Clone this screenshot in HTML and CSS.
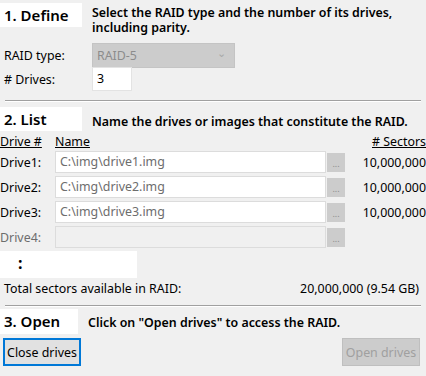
FILE: index.html
```html
<!DOCTYPE html>
<html lang="en">
<head>
  <meta charset="UTF-8" />
  <title>RAID</title>
  <link rel="stylesheet" href="styles.css">
</head>
<body>
  <div class="step step-define">
    <div class="tag">1. Define</div>
    <div class="desc">Select the RAID type and the number of its drives, including parity.</div>
  </div>

  <div class="field">
    <label>RAID type:</label>
    <div class="combo">RAID-5 <span class="arrow">&#8964;</span></div>
  </div>
  <div class="field">
    <label># Drives:</label>
    <div class="num">3</div>
  </div>

  <div class="sep"></div>

  <div class="step step-list">
    <div class="tag">2. List</div>
    <div class="desc">Name the drives or images that constitute the RAID.</div>
  </div>

  <div class="drive-head">
    <span class="col-drive">Drive #</span>
    <span class="col-name">Name</span>
    <span class="col-sectors"># Sectors</span>
  </div>

  <div id="drives"></div>

  <div class="more">:</div>

  <div class="total">
    <span>Total sectors available in RAID:</span>
    <span>20,000,000 (9.54 GB)</span>
  </div>

  <div class="sep sep-open"></div>

  <div class="step step-open">
    <div class="tag">3. Open</div>
    <div class="desc">Click on "Open drives" to access the RAID.</div>
  </div>

  <div class="actions">
    <button class="btn btn-focus">Close drives</button>
    <button class="btn" disabled>Open drives</button>
  </div>

  <script>
    const drives = [
      { name: 'Drive1:', path: 'C:\\img\\drive1.img', sectors: '10,000,000' },
      { name: 'Drive2:', path: 'C:\\img\\drive2.img', sectors: '10,000,000' },
      { name: 'Drive3:', path: 'C:\\img\\drive3.img', sectors: '10,000,000' },
      { name: 'Drive4:', path: '', sectors: '', off: true },
    ];

    const list = document.getElementById('drives');

    drives.forEach(d => {
      const row = document.createElement('div');
      row.className = 'drive' + (d.off ? ' off' : '');
      row.innerHTML =
        '<span class="col-drive"></span>' +
        '<div class="path"></div>' +
        '<div class="browse">...</div>' +
        '<span class="col-sectors"></span>';
      row.querySelector('.col-drive').textContent = d.name;
      row.querySelector('.path').textContent = d.path;
      row.querySelector('.col-sectors').textContent = d.sectors;
      list.appendChild(row);
    });
  </script>
</body>
</html>
```

FILE: styles.css
```css
* { box-sizing: border-box; }
body {
  margin: 0;
  width: 426px;
  height: 376px;
  overflow: hidden;
  background: #f0f0f0;
  font-family: "Noto Sans", sans-serif;
  font-size: 12.4px;
  color: #000;
}
.step {
  display: flex;
  align-items: flex-start;
}
.tag {
  width: 82px;
  height: 24px;
  flex: none;
  background: #fff;
  font-size: 15px;
  font-weight: 600;
  line-height: 24px;
  padding-left: 4px;
}
.desc {
  font-weight: 600;
  line-height: 15px;
  padding-left: 10px;
}
.step-define {
  margin-top: 3px;
  height: 40px;
}
.step-define .desc { padding-top: 2px; }
.step-list { margin-top: 5px; height: 24px; }
.step-list .desc { padding-top: 7px; }
.step-open { margin-top: 2px; height: 25px; }
.step-open .tag { width: 78px; height: 25px; line-height: 25px; }
.step-open .desc { padding-left: 10px; padding-top: 6px; }
.field {
  display: flex;
  align-items: center;
  height: 24px;
}
.field:first-of-type { margin-top: 1px; }
.field label {
  width: 92px;
  padding-left: 4px;
}
.combo {
  width: 143px;
  height: 25px;
  background: #cccccc;
  border: 1px solid #c4c4c4;
  color: #8c8c8c;
  line-height: 23px;
  padding-left: 4px;
  display: flex;
  justify-content: space-between;
}
.combo .arrow {
  color: #a8a8a8;
  font-size: 11px;
  padding-right: 8px;
  line-height: 18px;
}
.num {
  width: 40px;
  height: 24px;
  background: #fff;
  border: 1px solid #e3e3e3;
  line-height: 22px;
  padding-left: 4px;
}
.sep {
  margin: 9px 5px 0;
  height: 2px;
  border-top: 1px solid #a0a0a0;
  border-bottom: 1px solid #fff;
}
.drive-head {
  display: flex;
  align-items: center;
  height: 20px;
}
.drive-head span { text-decoration: underline; }
.col-drive { width: 55px; flex: none; }
.col-name { flex: 1; }
.col-sectors { flex: 1; text-align: right; white-space: nowrap; }
.drive-head .col-sectors { flex: none; }
.drive {
  display: flex;
  align-items: center;
  height: 22px;
  margin-bottom: 3px;
}
.path {
  width: 271px;
  height: 22px;
  flex: none;
  background: #fff;
  border: 1px solid #dcdcdc;
  color: #6d6d6d;
  line-height: 20px;
  padding-left: 4px;
}
.browse {
  width: 18px;
  height: 19px;
  flex: none;
  margin-left: 1px;
  background: #cccccc;
  color: #8c8c8c;
  font-size: 9px;
  text-align: center;
  line-height: 22px;
}
.drive.off .col-drive { color: #6d6d6d; }
.drive.off .path { background: #f0f0f0; }
.more {
  width: 137px;
  height: 27px;
  margin-top: 3px;
  background: #fff;
  padding-left: 18px;
  font-size: 16px;
  font-weight: bold;
  line-height: 25px;
}
.total {
  display: flex;
  justify-content: space-between;
  padding: 0 7px 0 4px;
  margin-top: 1px;
  height: 20px;
  line-height: 20px;
}
.sep-open { margin-top: 6px; }
.actions {
  display: flex;
  justify-content: space-between;
  padding: 4px 6px 0 3px;
}
.btn {
  width: 78px;
  height: 28px;
  font-family: "Noto Sans", sans-serif;
  font-size: 12.4px;
  background: #e1e1e1;
  border: 1px solid #adadad;
  padding: 0;
  color: #000;
}
.btn-focus { border: 2px solid #0078d7; }
.btn:disabled {
  background: #cccccc;
  border-color: #bfbfbf;
  color: #a0a0a0;
}
```
